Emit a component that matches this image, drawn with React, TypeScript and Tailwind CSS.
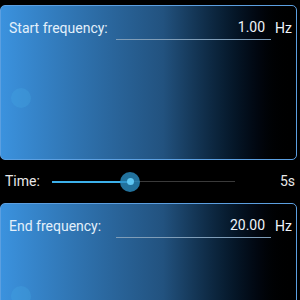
const font = { fontFamily: 'Roboto, "Noto Sans", sans-serif' }

interface FreqPanelProps {
    label: string,
    value: string,
}

const FreqPanel = ({ label, value }: FreqPanelProps) => {
    return (
        <div className="relative shrink-0 w-[297px] h-[155px] rounded-[5px] border border-[#5c9fe0] bg-gradient-to-r from-[#3b92de] via-[#22527f] via-55% to-black overflow-hidden">
            <div className="flex items-end h-[34px] pl-[8px] pr-[4px]">
                <span className="text-[14px] leading-[18px] text-[#e3f0fb] pb-[3px]">{label}</span>
                <div className="ml-auto w-[155px] border-b border-[#7f9db8] text-right pr-[6px] text-[14px] leading-[18px] text-[#eef4fa] pb-[3px]">{value}</div>
                <span className="ml-[4px] text-[14px] leading-[18px] text-[#eef4fa] pb-[3px]">Hz</span>
            </div>
            {/* faint knob */}
            <div className="absolute left-[10px] top-[82px] w-[20px] h-[20px] rounded-full bg-[#48afe6]/25" />
        </div>
    )
}

const App = () => {
    return (
        <div className="w-[300px] h-[300px] bg-black overflow-hidden flex flex-col pt-[5px]" style={font}>
            <FreqPanel label="Start frequency:" value="1.00" />

            <div className="flex items-center h-[43px] shrink-0">
                <span className="pl-[5px] w-[52px] text-[14px] text-[#e8e8e8]">Time:</span>
                <div className="relative w-[183px] h-[20px] flex items-center">
                    <div className="h-[2px] w-[78px] bg-[#3cb0ea]" />
                    <div className="h-[1px] flex-1 bg-[#3a3a3a]" />
                    <div className="absolute left-[68px] top-0 w-[20px] h-[20px] rounded-full bg-[#2b8ec4]/80 flex items-center justify-center">
                        <div className="w-[7px] h-[7px] rounded-full bg-[#5fc8f4]" />
                    </div>
                </div>
                <span className="ml-auto pr-[5px] text-[14px] text-[#e8e8e8]">5s</span>
            </div>

            <FreqPanel label="End frequency:" value="20.00" />
        </div>
    )
}

export default App
